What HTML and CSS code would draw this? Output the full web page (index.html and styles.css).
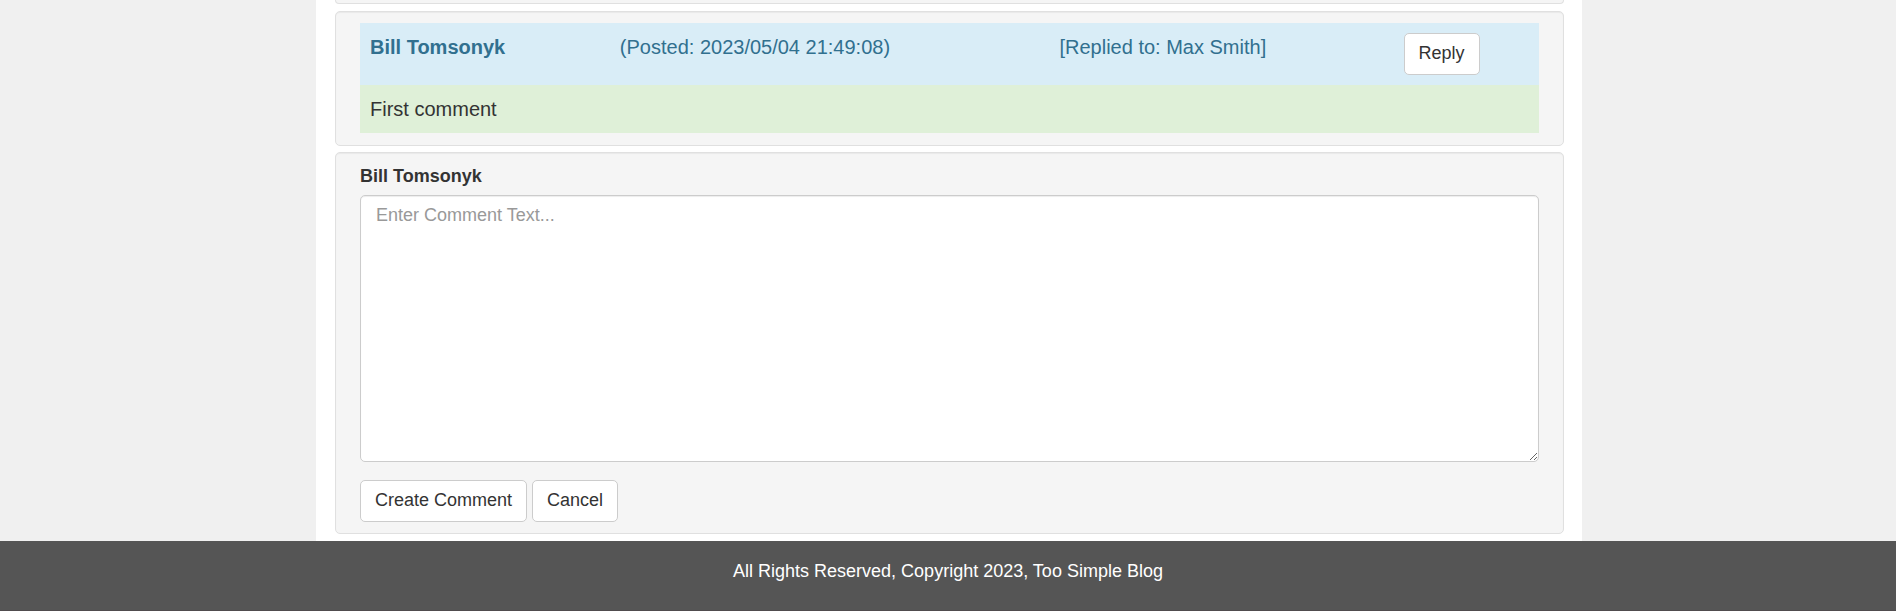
FILE: index.html
```
<!DOCTYPE html>
<html lang="en">
<head>
<meta charset="utf-8">
<title>Too Simple Blog</title>
<link rel="stylesheet" href="styles.css">
</head>
<body>
<main class="page">
  <section class="well well-previous"></section>
  <article class="well">
    <table class="comment">
      <colgroup><col class="col-author"><col class="col-date"><col class="col-target"><col class="col-action"></colgroup>
      <tbody>
        <tr class="comment-info">
          <th scope="row">Bill Tomsonyk</th>
          <td>(Posted: 2023/05/04 21:49:08)</td>
          <td>[Replied to: Max Smith]</td>
          <td><button type="button" class="btn">Reply</button></td>
        </tr>
        <tr class="comment-body"><td colspan="4">First comment</td></tr>
      </tbody>
    </table>
  </article>
  <form class="well">
    <label class="form-label" for="comment-text">Bill Tomsonyk</label>
    <textarea class="form-text" id="comment-text" rows="10" placeholder="Enter Comment Text..."></textarea>
    <div class="actions">
      <button type="submit" class="btn">Create Comment</button>
      <button type="button" class="btn">Cancel</button>
    </div>
  </form>
</main>
<footer class="footer">All Rights Reserved, Copyright 2023, Too Simple Blog</footer>
</body>
</html>
```
FILE: styles.css
```
* { box-sizing: border-box; }
body {
  margin: 0;
  background: #f0f0f0;
  color: #333;
  font: 18px/25px "Liberation Sans", Arial, sans-serif;
}
.page {
  display: flex;
  flex-direction: column;
  gap: 6px;
  width: 66.75%;
  margin-left: 16.667%;
  padding: 0 18px 7px 19px;
  background: #fff;
}
.well {
  padding: 11px 24px;
  background: #f5f5f5;
  border: 1px solid #e0e0e0;
  border-radius: 5px;
  box-shadow: inset 0 1px 1px rgba(0, 0, 0, .05);
}
.well-previous {
  height: 4px;
  margin-bottom: 1px;
  padding: 0;
  border-top: 0;
  border-radius: 0 0 5px 5px;
  box-shadow: none;
}
.comment {
  width: 100%;
  margin-bottom: 1px;
  border-collapse: collapse;
  table-layout: fixed;
  font-size: 20px;
  line-height: 28px;
}
.col-author { width: 21.2%; }
.col-date { width: 37.3%; }
.col-target { width: 29.2%; }
.col-action { width: 12.3%; }
.comment th, .comment td {
  padding: 10px;
  text-align: left;
  vertical-align: top;
}
.comment-info {
  background: #d9edf7;
  color: #31708f;
}
.comment-body { background: #dff0d8; }
.btn {
  display: block;
  padding: 7px 14px 8px;
  background: #fff;
  border: 1px solid #ccc;
  border-radius: 5px;
  color: #333;
  font: inherit;
  font-size: 18px;
  line-height: 25px;
}
.form-label {
  display: block;
  margin-bottom: 6px;
  font-weight: bold;
}
.form-text {
  display: block;
  width: 100%;
  padding: 7px 15px 8px;
  background: #fff;
  border: 1px solid #ccc;
  border-radius: 5px;
  box-shadow: inset 0 1px 1px rgba(0, 0, 0, .075);
  color: #555;
  font: inherit;
  resize: vertical;
}
.form-text::placeholder { color: #999; }
.actions {
  display: flex;
  gap: 5px;
  margin-top: 18px;
}
.footer {
  padding: 18px 0 26px;
  background: #555;
  border-bottom: 1px solid #504c4e;
  color: #fff;
  text-align: center;
}
```
